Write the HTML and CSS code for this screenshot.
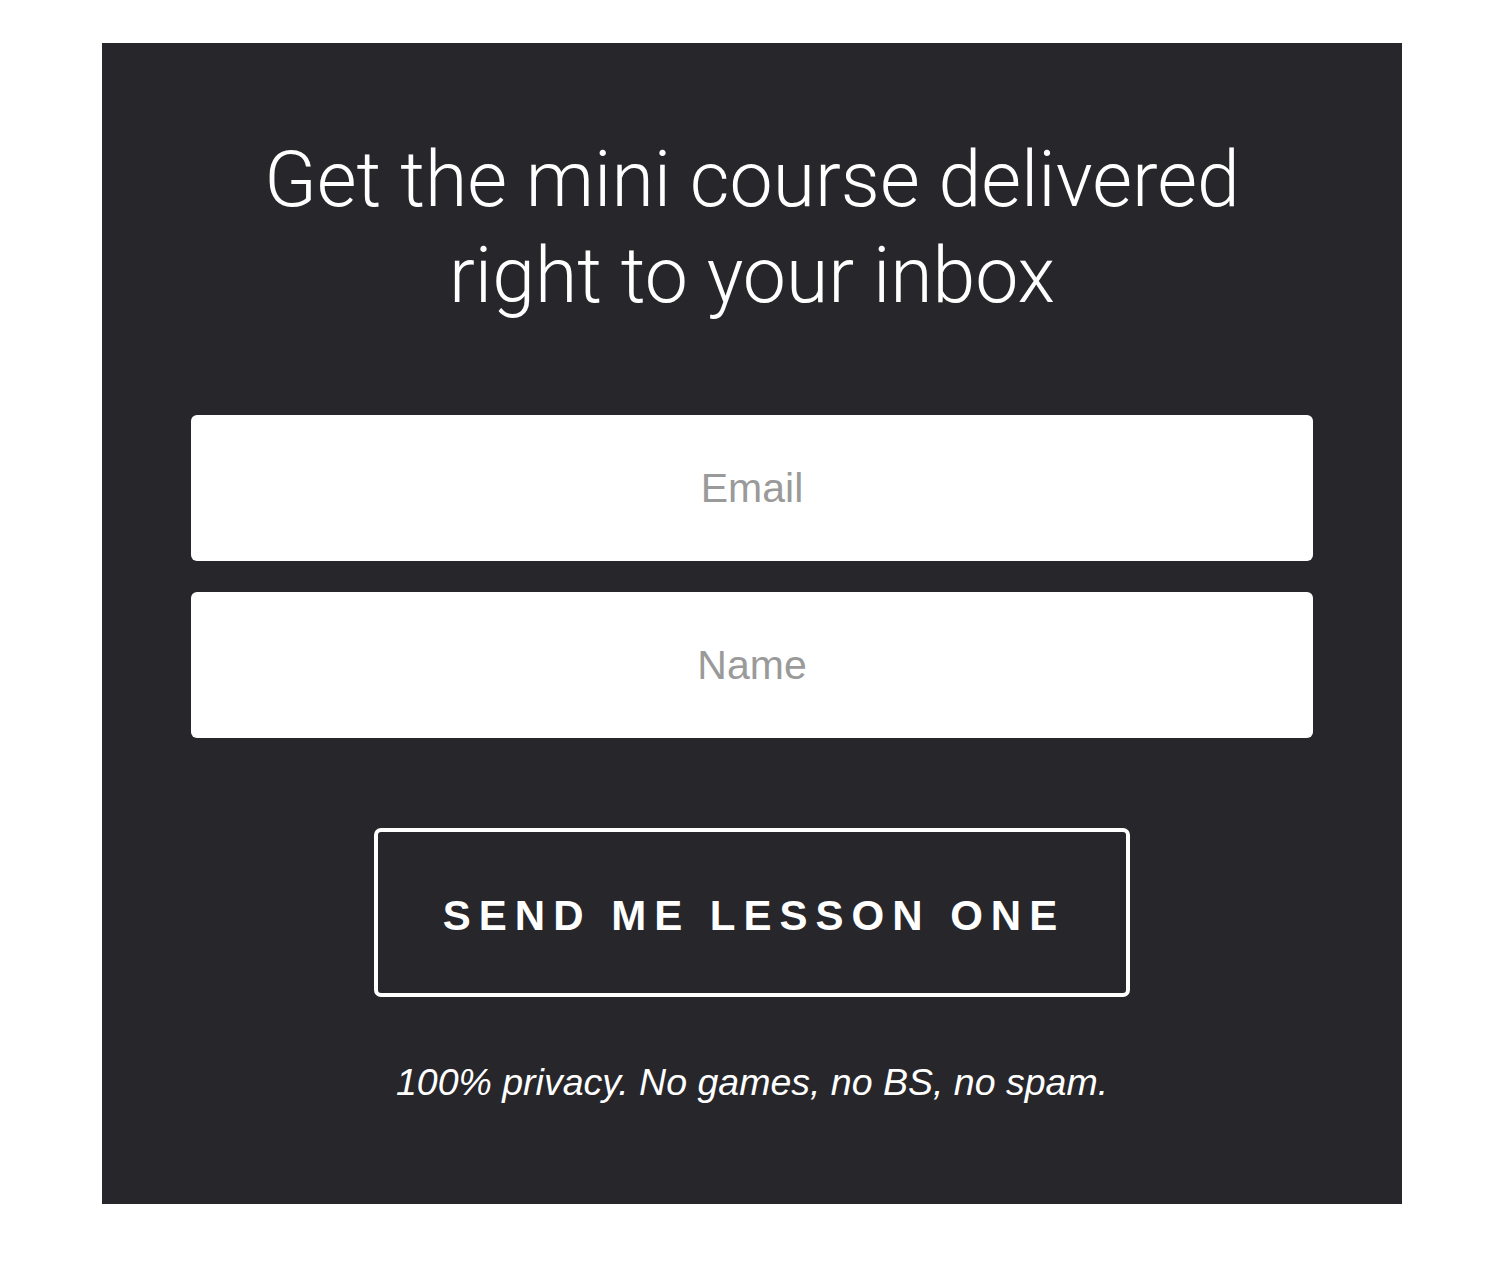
FILE: index.html
```html
<!DOCTYPE html>
<html>
<head>
<meta charset="utf-8">
<link rel="stylesheet" href="styles.css">
</head>
<body>
<div class="page">
  <section class="panel">
    <h1 class="title">Get the mini course delivered<br>right to your inbox</h1>
    <form class="form">
      <input class="field" type="email" placeholder="Email">
      <input class="field" type="text" placeholder="Name">
      <button class="btn" type="button">SEND ME LESSON ONE</button>
    </form>
    <p class="note">100% privacy. No games, no BS, no spam.</p>
  </section>
</div>
</body>
</html>
```
FILE: styles.css
```css
html, body {
  margin: 0;
  padding: 0;
  background: #ffffff;
}
.page {
  padding: 43px 98px 69px 102px;
}
.panel {
  width: 1300px;
  height: 1161px;
  box-sizing: border-box;
  background: #27262b;
  display: flex;
  flex-direction: column;
  align-items: center;
  padding: 89px 89px 0;
}
.title {
  margin: 0;
  font-family: Roboto, "Liberation Sans", sans-serif;
  font-weight: 300;
  font-size: 77px;
  line-height: 96px;
  color: #ffffff;
  text-align: center;
}
.form {
  margin-top: 91px;
  width: 100%;
  display: flex;
  flex-direction: column;
  align-items: center;
}
.field {
  width: 100%;
  height: 146px;
  box-sizing: border-box;
  border: none;
  border-radius: 6px;
  background: #ffffff;
  font-family: "Liberation Sans", Arial, sans-serif;
  font-size: 41px;
  text-align: center;
  color: #333;
  margin: 0 0 31px;
  outline: none;
}
.field::placeholder {
  color: #9a9a9a;
}
.btn {
  margin-top: 59px;
  width: 756px;
  height: 169px;
  box-sizing: border-box;
  background: #27262b;
  border: 4px solid #ffffff;
  border-radius: 7px;
  color: #ffffff;
  font-family: "Liberation Sans", Arial, sans-serif;
  font-weight: 700;
  font-size: 42px;
  letter-spacing: 8px;
  padding: 6px 0 0 4px;
}
.note {
  margin: 64px 0 0;
  font-family: "Liberation Sans", Arial, sans-serif;
  font-style: italic;
  font-size: 37.5px;
  color: #ffffff;
}
```
